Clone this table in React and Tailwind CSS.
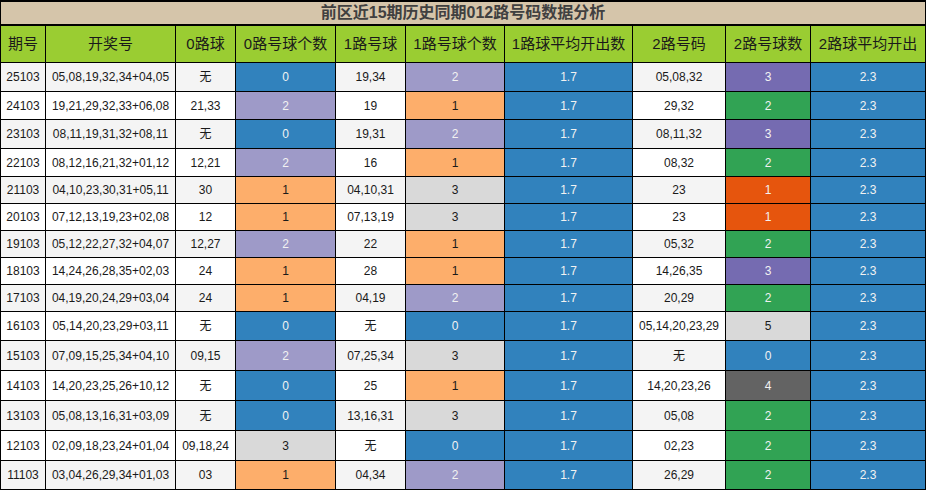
import React from "react";

const C = {
  blue: "bg-[#3182bd] text-[#f2f2f2]",
  orange: "bg-[#fdae6b] text-[#1a1a1a]",
  lav: "bg-[#9e9ac8] text-[#f2f2f2]",
  lgray: "bg-[#d9d9d9] text-[#1a1a1a]",
  purple: "bg-[#756bb1] text-[#f2f2f2]",
  green: "bg-[#31a354] text-[#f2f2f2]",
  red: "bg-[#e6550d] text-[#f2f2f2]",
  dgray: "bg-[#636363] text-[#f2f2f2]",
};

const c01 = { 0: C.blue, 1: C.orange, 2: C.lav, 3: C.lgray };
const c2 = { 0: C.blue, 1: C.red, 2: C.green, 3: C.purple, 4: C.dgray, 5: C.lgray };

const rows = [
  ["h-[29px]", "25103", "05,08,19,32,34+04,05", "无", 0, "19,34", 2, "05,08,32", 3],
  ["h-[28px]", "24103", "19,21,29,32,33+06,08", "21,33", 2, "19", 1, "29,32", 2],
  ["h-[29px]", "23103", "08,11,19,31,32+08,11", "无", 0, "19,31", 2, "08,11,32", 3],
  ["h-[28px]", "22103", "08,12,16,21,32+01,12", "12,21", 2, "16", 1, "08,32", 2],
  ["h-[27px]", "21103", "04,10,23,30,31+05,11", "30", 1, "04,10,31", 3, "23", 1],
  ["h-[27px]", "20103", "07,12,13,19,23+02,08", "12", 1, "07,13,19", 3, "23", 1],
  ["h-[27px]", "19103", "05,12,22,27,32+04,07", "12,27", 2, "22", 1, "05,32", 2],
  ["h-[27px]", "18103", "14,24,26,28,35+02,03", "24", 1, "28", 1, "14,26,35", 3],
  ["h-[27px]", "17103", "04,19,20,24,29+03,04", "24", 1, "04,19", 2, "20,29", 2],
  ["h-[29px]", "16103", "05,14,20,23,29+03,11", "无", 0, "无", 0, "05,14,20,23,29", 5],
  ["h-[30px]", "15103", "07,09,15,25,34+04,10", "09,15", 2, "07,25,34", 3, "无", 0],
  ["h-[30px]", "14103", "14,20,23,25,26+10,12", "无", 0, "25", 1, "14,20,23,26", 4],
  ["h-[30px]", "13103", "05,08,13,16,31+03,09", "无", 0, "13,16,31", 3, "05,08", 2],
  ["h-[30px]", "12103", "02,09,18,23,24+01,04", "09,18,24", 3, "无", 0, "02,23", 2],
  ["h-[29px]", "11103", "03,04,26,29,34+01,03", "03", 1, "04,34", 2, "26,29", 2],
];

const headers = [
  "期号",
  "开奖号",
  "0路球",
  "0路号球个数",
  "1路号球",
  "1路号球个数",
  "1路球平均开出数",
  "2路号码",
  "2路号球数",
  "2路球平均开出",
];

const cell =
  "flex items-center justify-center border-r border-b border-black whitespace-nowrap overflow-hidden";

export default function App() {
  return (
    <div
      className="w-[926px] h-[490px] bg-white overflow-hidden"
      style={{ fontFamily: '"Liberation Sans", "Noto Sans CJK SC", sans-serif' }}
    >
      <div className="border-l border-t-2 border-black">
        <div className="h-[24px] flex items-center justify-center bg-[#d5c5aa] border-r border-b-2 border-black text-[16px] font-bold text-[#404040]">
          前区近15期历史同期012路号码数据分析
        </div>
        <div className="grid grid-cols-[45px_130px_60px_100px_70px_99px_128px_93px_85px_115px]">
          {headers.map((h) => (
            <div
              key={h}
              className={`${cell} h-[37px] bg-[#9acd32] text-[15px] text-[#1a1a1a]`}
            >
              {h}
            </div>
          ))}
          {rows.map((r, i) => {
            const [hc, qh, kj, l0, n0, l1, n1, l2, n2] = r;
            const base = i % 2 === 0 ? "bg-[#f4f4f4] text-[#1a1a1a]" : "bg-white text-[#1a1a1a]";
            const t = "text-[12px]";
            return (
              <React.Fragment key={qh}>
                <div className={`${cell} ${hc} ${base} ${t}`}>{qh}</div>
                <div className={`${cell} ${hc} ${base} ${t}`}>{kj}</div>
                <div className={`${cell} ${hc} ${base} ${t}`}>{l0}</div>
                <div className={`${cell} ${hc} ${c01[n0]} ${t}`}>{n0}</div>
                <div className={`${cell} ${hc} ${base} ${t}`}>{l1}</div>
                <div className={`${cell} ${hc} ${c01[n1]} ${t}`}>{n1}</div>
                <div className={`${cell} ${hc} ${C.blue} ${t}`}>1.7</div>
                <div className={`${cell} ${hc} ${base} ${t}`}>{l2}</div>
                <div className={`${cell} ${hc} ${c2[n2]} ${t}`}>{n2}</div>
                <div className={`${cell} ${hc} ${C.blue} ${t}`}>2.3</div>
              </React.Fragment>
            );
          })}
        </div>
      </div>
    </div>
  );
}
